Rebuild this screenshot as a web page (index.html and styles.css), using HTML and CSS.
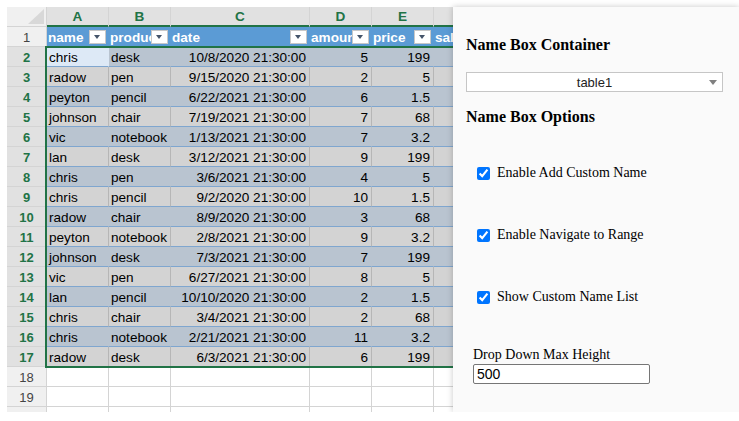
FILE: index.html
```html
<!DOCTYPE html>
<html lang="en">
<head>
<meta charset="utf-8">
<title>Name Box</title>
<link rel="stylesheet" href="styles.css">
</head>
<body>
<div class="app">
  <div class="sheet">
    <div class="row hdr">
      <div class="corner"><span class="corner-tri"></span></div>
      <div class="ch sel">A</div><div class="ch sel">B</div><div class="ch sel">C</div><div class="ch sel">D</div><div class="ch sel">E</div><div class="ch sel">F</div>
    </div>
    <div class="row">
      <div class="rh">1</div>
      <div class="th"><span class="tt">name</span><i class="fb"></i></div>
      <div class="th"><span class="tt">product</span><i class="fb"></i></div>
      <div class="th"><span class="tt">date</span><i class="fb"></i></div>
      <div class="th"><span class="tt">amount</span><i class="fb"></i></div>
      <div class="th"><span class="tt">price</span><i class="fb"></i></div>
      <div class="th"><span class="tt">sal</span></div>
    </div>
    <div class="row band"><div class="rh sel">2</div><div class="c active">chris</div><div class="c">desk</div><div class="c r">10/8/2020 21:30:00</div><div class="c r">5</div><div class="c r">199</div><div class="c"></div></div>
    <div class="row plain"><div class="rh sel">3</div><div class="c">radow</div><div class="c">pen</div><div class="c r">9/15/2020 21:30:00</div><div class="c r">2</div><div class="c r">5</div><div class="c"></div></div>
    <div class="row band"><div class="rh sel">4</div><div class="c">peyton</div><div class="c">pencil</div><div class="c r">6/22/2021 21:30:00</div><div class="c r">6</div><div class="c r">1.5</div><div class="c"></div></div>
    <div class="row plain"><div class="rh sel">5</div><div class="c">johnson</div><div class="c">chair</div><div class="c r">7/19/2021 21:30:00</div><div class="c r">7</div><div class="c r">68</div><div class="c"></div></div>
    <div class="row band"><div class="rh sel">6</div><div class="c">vic</div><div class="c">notebook</div><div class="c r">1/13/2021 21:30:00</div><div class="c r">7</div><div class="c r">3.2</div><div class="c"></div></div>
    <div class="row plain"><div class="rh sel">7</div><div class="c">lan</div><div class="c">desk</div><div class="c r">3/12/2021 21:30:00</div><div class="c r">9</div><div class="c r">199</div><div class="c"></div></div>
    <div class="row band"><div class="rh sel">8</div><div class="c">chris</div><div class="c">pen</div><div class="c r">3/6/2021 21:30:00</div><div class="c r">4</div><div class="c r">5</div><div class="c"></div></div>
    <div class="row plain"><div class="rh sel">9</div><div class="c">chris</div><div class="c">pencil</div><div class="c r">9/2/2020 21:30:00</div><div class="c r">10</div><div class="c r">1.5</div><div class="c"></div></div>
    <div class="row band"><div class="rh sel">10</div><div class="c">radow</div><div class="c">chair</div><div class="c r">8/9/2020 21:30:00</div><div class="c r">3</div><div class="c r">68</div><div class="c"></div></div>
    <div class="row plain"><div class="rh sel">11</div><div class="c">peyton</div><div class="c">notebook</div><div class="c r">2/8/2021 21:30:00</div><div class="c r">9</div><div class="c r">3.2</div><div class="c"></div></div>
    <div class="row band"><div class="rh sel">12</div><div class="c">johnson</div><div class="c">desk</div><div class="c r">7/3/2021 21:30:00</div><div class="c r">7</div><div class="c r">199</div><div class="c"></div></div>
    <div class="row plain"><div class="rh sel">13</div><div class="c">vic</div><div class="c">pen</div><div class="c r">6/27/2021 21:30:00</div><div class="c r">8</div><div class="c r">5</div><div class="c"></div></div>
    <div class="row band"><div class="rh sel">14</div><div class="c">lan</div><div class="c">pencil</div><div class="c r">10/10/2020 21:30:00</div><div class="c r">2</div><div class="c r">1.5</div><div class="c"></div></div>
    <div class="row plain"><div class="rh sel">15</div><div class="c">chris</div><div class="c">chair</div><div class="c r">3/4/2021 21:30:00</div><div class="c r">2</div><div class="c r">68</div><div class="c"></div></div>
    <div class="row band"><div class="rh sel">16</div><div class="c">chris</div><div class="c">notebook</div><div class="c r">2/21/2021 21:30:00</div><div class="c r">11</div><div class="c r">3.2</div><div class="c"></div></div>
    <div class="row plain"><div class="rh sel">17</div><div class="c">radow</div><div class="c">desk</div><div class="c r">6/3/2021 21:30:00</div><div class="c r">6</div><div class="c r">199</div><div class="c"></div></div>
    <div class="row"><div class="rh">18</div><div class="e"></div><div class="e"></div><div class="e"></div><div class="e"></div><div class="e"></div><div class="e"></div></div>
    <div class="row"><div class="rh">19</div><div class="e"></div><div class="e"></div><div class="e"></div><div class="e"></div><div class="e"></div><div class="e"></div></div>
    <div class="row"><div class="rh"></div><div class="e"></div><div class="e"></div><div class="e"></div><div class="e"></div><div class="e"></div><div class="e"></div></div>
    <div class="selection"></div>
  </div>
  <aside class="panel">
    <h4 class="title-a">Name Box Container</h4>
    <div class="select-wrap">
      <select class="nb-select"><option>table1</option></select>
    </div>
    <h4 class="title-b">Name Box Options</h4>
    <label class="opt first"><input type="checkbox" checked><span>Enable Add Custom Name</span></label>
    <label class="opt"><input type="checkbox" checked><span>Enable Navigate to Range</span></label>
    <label class="opt"><input type="checkbox" checked><span>Show Custom Name List</span></label>
    <div class="field">
      <label class="field-label" for="mh">Drop Down Max Height</label>
      <input id="mh" class="field-input" type="text" value="500">
    </div>
  </aside>
</div>
</body>
</html>
```
FILE: styles.css
```css
html, body {
  margin: 0;
  padding: 0;
  background: #fff;
  font-family: "Liberation Sans", Arial, sans-serif;
}

.app {
  display: flex;
  margin: 7px 0 0 7px;
  height: 405px;
  width: 732px;
}

.sheet {
  flex: 1;
  min-width: 0;
  overflow: hidden;
  position: relative;
  font-size: 13.6px;
  color: #000;
}

.row {
  display: grid;
  grid-template-columns: 40px 62px 62px 139px 62px 62px 100px;
  height: 20px;
}

.row > div {
  box-sizing: border-box;
  height: 20px;
  border-right: 1px solid #d4d4d4;
  border-bottom: 1px solid #d4d4d4;
  overflow: hidden;
  white-space: nowrap;
}

/* column headers */
.corner {
  background: #f0f0f0;
  position: relative;
}
.corner-tri {
  position: absolute;
  right: 2px;
  bottom: 2px;
  width: 16px;
  height: 15px;
  background: #d8d8d8;
  clip-path: polygon(100% 0, 100% 100%, 0 100%);
}
.ch {
  background: #f0f0f0;
  color: #444;
  text-align: center;
  line-height: 19px;
  font-weight: bold;
}
.ch.sel {
  background: #e1e1e1;
  color: #217346;
  border-bottom-color: #217346 !important;
  box-shadow: inset 0 -1px 0 #217346;
}

/* row headers */
.rh {
  background: #f0f0f0;
  color: #444;
  text-align: center;
  font-size: 13px;
  padding-top: 3px;
  line-height: 16px;
}
.rh.sel {
  background: #e1e1e1;
  color: #217346;
  font-weight: bold;
}

/* table header row */
.th {
  display: flex;
  background: #5b9bd5;
  color: #fff;
  font-weight: bold;
  padding-top: 3px;
  border-right-color: #5b9bd5 !important;
  border-bottom-color: #5b9bd5 !important;
}
.tt {
  flex: 1;
  min-width: 0;
  overflow: hidden;
  line-height: 16px;
  padding-left: 1px;
}
.fb {
  flex: none;
  align-self: flex-end;
  position: relative;
  box-sizing: border-box;
  width: 17px;
  height: 14px;
  margin: 0 2px 2px 0;
  background: #fff;
  border: 1px solid #c8c8c8;
}
.fb::after {
  content: "";
  position: absolute;
  left: 4px;
  top: 4px;
  border-left: 3.5px solid transparent;
  border-right: 3.5px solid transparent;
  border-top: 4px solid #44546a;
}

/* data cells */
.c {
  padding: 3px 3px 0 2px;
  line-height: 16px;
}
.c.r {
  text-align: right;
}
.band .c {
  background: #b9c4d0;
  border-right-color: #b9c4d0;
  border-bottom-color: #7fa6cf;
}
.plain .c {
  background: #d3d3d3;
  border-right-color: #b6b6b6;
  border-bottom-color: #7fa6cf;
}
.band .c.active {
  background: #dde9f6;
  border-right-color: #dde9f6;
}
.e {
  background: #fff;
}

.selection {
  position: absolute;
  left: 38px;
  top: 39px;
  width: 520px;
  height: 322px;
  box-sizing: border-box;
  border: 2px solid #217346;
  pointer-events: none;
}

/* side panel */
.panel {
  flex: none;
  width: 286px;
  box-sizing: border-box;
  padding: 0 13px;
  background: #fafafa;
  box-shadow: 0 0 6px rgba(0, 0, 0, 0.22);
  position: relative;
  font-family: "Liberation Serif", "Times New Roman", serif;
  color: #000;
}
.panel h4 {
  margin: 0;
  font-size: 16px;
  line-height: 18px;
  font-weight: bold;
}
.title-a {
  padding-top: 29px;
}
.title-b {
  margin-top: 16px !important;
}

.select-wrap {
  position: relative;
  margin-top: 18px;
  width: 257px;
}
.select-wrap::after {
  content: "";
  position: absolute;
  right: 6px;
  top: 8px;
  border-left: 4px solid transparent;
  border-right: 4px solid transparent;
  border-top: 5px solid #808080;
  pointer-events: none;
}
.nb-select {
  display: block;
  appearance: none;
  -webkit-appearance: none;
  width: 257px;
  height: 20px;
  box-sizing: border-box;
  margin: 0;
  padding: 0;
  border: 1px solid #c6c6c6;
  border-radius: 0;
  background: #fff;
  color: #222;
  font-family: "Liberation Sans", Arial, sans-serif;
  font-size: 13px;
  text-align: center;
  text-align-last: center;
}

.opt {
  display: flex;
  align-items: center;
  height: 20px;
  margin-top: 42px;
  padding-left: 11px;
  font-size: 14px;
}
.opt.first {
  margin-top: 37px;
}
.opt input {
  margin: 0 7px 0 0;
  width: 13px;
  height: 13px;
}

.field {
  margin-top: 40px;
  padding-left: 7px;
}
.field-label {
  display: block;
  font-size: 14px;
  line-height: 16px;
}
.field-input {
  display: block;
  margin-top: 1px;
  width: 177px;
  height: 20px;
  box-sizing: border-box;
  border: 1px solid #767676;
  border-radius: 2px;
  padding: 0 3px;
  background: #fff;
  font-family: "Liberation Sans", Arial, sans-serif;
  font-size: 14px;
  color: #000;
}
```
